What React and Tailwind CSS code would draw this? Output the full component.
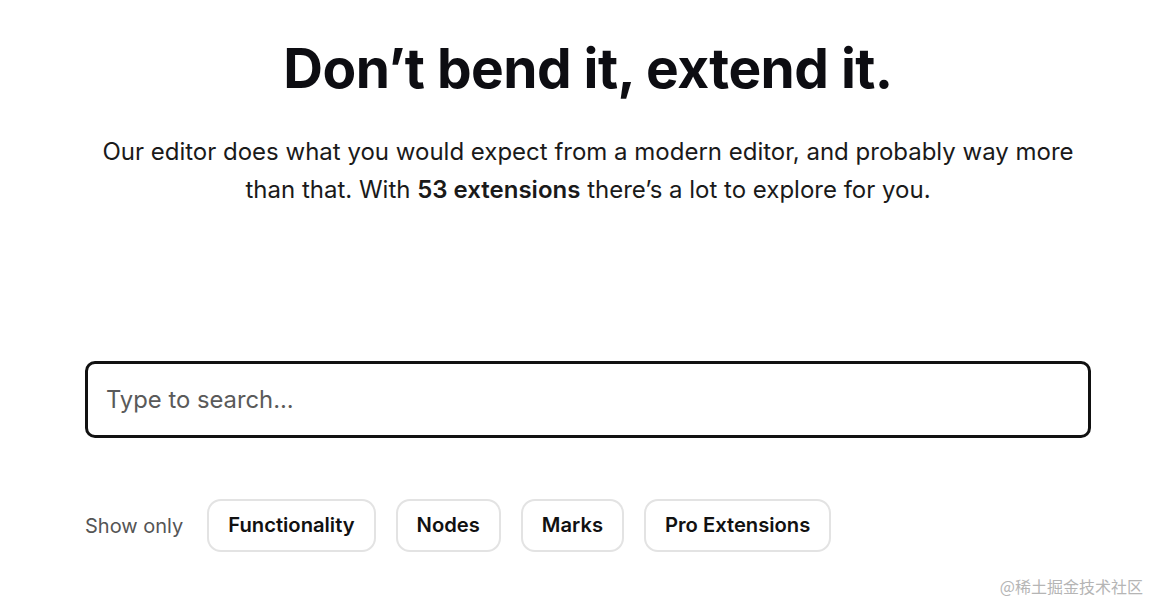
import React from "react";

const filters = ["Functionality", "Nodes", "Marks", "Pro Extensions"];

export default function App() {
  return (
    <div className="relative h-[606px] w-[1150px] overflow-hidden bg-white font-['Inter',sans-serif] text-[#0d0d12]">
      <div className="ml-[85px] w-[1006px]">
        <h1 className="pt-[36px] text-center text-[55px] font-bold leading-[64px] tracking-[-0.01em]">
          Don’t bend it, extend it.
        </h1>
        <p className="mx-auto mt-[33px] w-[990px] text-center text-[24px] leading-[38px] text-[#1a1a1a]">
          Our editor does what you would expect from a modern editor, and probably way more than that. With{" "}
          <strong className="font-semibold">53 extensions</strong> there’s a lot to explore for you.
        </p>

        <div className="mt-[152px]">
          <input
            type="text"
            placeholder="Type to search..."
            className="h-[77px] w-full rounded-[10px] border-[3px] border-[#111] px-[18px] text-[23.8px] text-[#111] placeholder:text-[#5a5a5a] focus:outline-none"
          />
        </div>

        <div className="mt-[61px] flex items-center gap-[20px]">
          <span className="mr-[4px] text-[20px] text-[#555]">Show only</span>
          {filters.map((f) => (
            <button
              key={f}
              type="button"
              className="h-[53px] rounded-[14px] border-2 border-[#e3e3e3] bg-white px-[19px] text-[20.2px] font-semibold text-[#111]"
            >
              {f}
            </button>
          ))}
        </div>
      </div>

      <div className="absolute bottom-[8px] right-[7px] font-['Noto_Sans_CJK_SC',sans-serif] text-[16px] text-[#b5b5b5]">
        @稀土掘金技术社区
      </div>
    </div>
  );
}
